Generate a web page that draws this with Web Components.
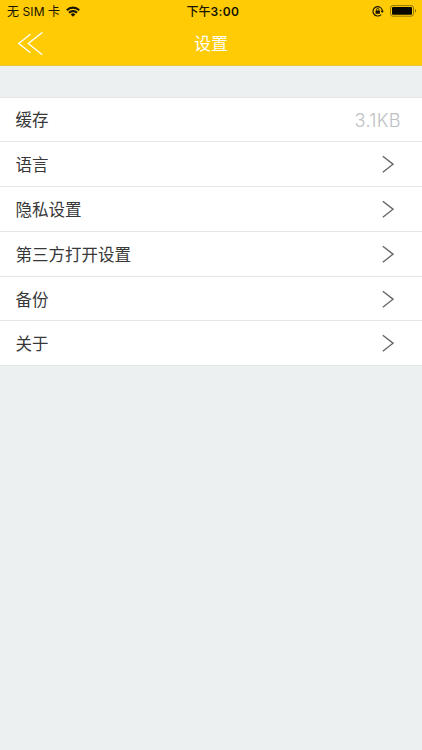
<!DOCTYPE html>
<html lang="zh-CN">
<head>
<meta charset="UTF-8">
<meta name="viewport" content="width=device-width, initial-scale=1">
<title>设置</title>
<style>
  html, body {
    margin: 0;
    height: 100%;
    background: #ecf0f1;
    font-family: Inter, "Noto Sans CJK SC", sans-serif;
    overflow: hidden;
  }
</style>
</head>
<body>
<settings-page>
  <status-bar slot="status" carrier="无 SIM 卡" time="3:00" period="下午"></status-bar>
  <nav-bar slot="nav">设置</nav-bar>
  <settings-row value="3.1KB">缓存</settings-row>
  <settings-row>语言</settings-row>
  <settings-row>隐私设置</settings-row>
  <settings-row>第三方打开设置</settings-row>
  <settings-row>备份</settings-row>
  <settings-row>关于</settings-row>
</settings-page>

<script>
class StatusBarComponent extends HTMLElement {
  constructor() {
    super();
    this._shadow = this.attachShadow({ mode: "open" });
    this._shadow.append(this.template.content.cloneNode(true));
  }

  get styleTemplate() {
    return `
      :host {
        display: grid;
        grid-template-columns: 1fr auto 1fr;
        align-items: center;
        height: 22px;
        padding: 0 5px 0 7px;
        box-sizing: border-box;
        color: #161300;
        font-size: 12px;
        line-height: 21px;
        white-space: nowrap;
      }

      .left, .right {
        display: flex;
        align-items: center;
        height: 22px;
      }

      .left { gap: 6px; }
      .right { justify-content: flex-end; gap: 6px; }

      .carrier {
        letter-spacing: 0.1px;
        padding-top: 1px;
      }

      .time {
        font-weight: 600;
        font-size: 12px;
        letter-spacing: 0.4px;
        padding: 1px 0 0 2px;
      }

      .period {
        font-weight: 500;
        letter-spacing: 0;
      }

      svg { display: block; }
      .right svg { margin-bottom: 1px; }
    `;
  }

  get template() {
    const template = document.createElement("template");
    template.innerHTML = `
      <style>${this.styleTemplate}</style>
      <div class="left">
        <span class="carrier">${this.getAttribute("carrier")}</span>
        <svg width="14" height="11" viewBox="0 0 14 11" fill="none" stroke="#161300" stroke-width="2.1">
          <path d="M.8 4.2a8.8 8.8 0 0 1 12.4 0"/>
          <path d="M3 6.8a5.7 5.7 0 0 1 8 0"/>
          <path d="M7 10.8 4.7 8.5a3.2 3.2 0 0 1 4.6 0z" fill="#161300" stroke="none"/>
        </svg>
      </div>
      <div class="time"><span class="period">${this.getAttribute("period")}</span>${this.getAttribute("time")}</div>
      <div class="right">
        <svg width="12" height="12" viewBox="0 0 12 12" fill="none" stroke="#161300">
          <path d="M9.1 9.6a4.7 4.7 0 1 1 1.3-3.7" stroke-width="1.1"/>
          <path d="M8.5 5.7h3.4l-1.7 2.2z" fill="#161300" stroke="none"/>
          <rect x="3.5" y="5.5" width="4.4" height="3.2" rx=".4" fill="#161300" stroke="none"/>
          <path d="M4.5 5.7V4.6a1.2 1.2 0 0 1 2.4 0v1.1" stroke-width=".9"/>
        </svg>
        <svg width="27" height="12" viewBox="0 0 27 12">
          <rect x=".5" y=".6" width="23" height="10.6" rx="2.4" fill="none" stroke="#161300" stroke-opacity=".5" stroke-width=".9"/>
          <rect x="2" y="2.1" width="20" height="7.6" rx="1" fill="#080700"/>
          <path d="M25 4.1c1.4.5 1.4 3.1 0 3.6z" fill="#161300" fill-opacity=".5"/>
        </svg>
      </div>`;
    return template;
  }
}

class NavBarComponent extends HTMLElement {
  constructor() {
    super();
    this._shadow = this.attachShadow({ mode: "open" });
    this._shadow.append(this.template.content.cloneNode(true));
  }

  get styleTemplate() {
    return `
      :host {
        display: grid;
        grid-template-columns: 1fr auto 1fr;
        align-items: center;
        height: 43px;
        padding: 0 17px;
        color: #fff;
        font-size: 17px;
        line-height: 43px;
      }

      slot {
        display: block;
        padding-top: 1px;
        height: 42px;
      }

      svg { display: block; }
    `;
  }

  get template() {
    const template = document.createElement("template");
    template.innerHTML = `
      <style>${this.styleTemplate}</style>
      <svg width="27" height="24" viewBox="0 0 27 24" fill="none" stroke="#fff" stroke-width="1.3">
        <path d="M13.5 2.2 1.7 11.5l11.8 9.3M25.3.4 11.3 11.5l14 11.2"/>
      </svg>
      <slot></slot>
      <span></span>`;
    return template;
  }
}

class SettingsRowComponent extends HTMLElement {
  constructor() {
    super();
    this._shadow = this.attachShadow({ mode: "open" });
    this._shadow.append(this.template.content.cloneNode(true));
  }

  get styleTemplate() {
    return `
      :host {
        display: flex;
        align-items: center;
        justify-content: space-between;
        height: 44.8px;
        padding: 0 21px 0 16px;
        box-sizing: border-box;
        border-bottom: 1px solid #e4e6e7;
        background: #fff;
        color: #383838;
        font-size: 16.5px;
        line-height: 42px;
      }

      .label {
        margin-left: -0.5px;
        padding-top: 2px;
      }

      .value {
        color: #bdc1c4;
        font-weight: 300;
        font-size: 18.2px;
        letter-spacing: 0.3px;
        padding-top: 2px;
      }

      svg {
        display: block;
        margin-right: 7px;
      }
    `;
  }

  get detail() {
    const value = this.getAttribute("value");
    if (value) {
      return `<span class="value">${value}</span>`;
    }
    return `
      <svg width="13" height="18" viewBox="0 0 13 18" fill="none" stroke="#666" stroke-width="1.4">
        <path d="M1.8 1.2 12 9.2 1.8 17.2"/>
      </svg>`;
  }

  get template() {
    const template = document.createElement("template");
    template.innerHTML = `
      <style>${this.styleTemplate}</style>
      <span class="label"><slot></slot></span>
      ${this.detail}`;
    return template;
  }
}

class SettingsPageComponent extends HTMLElement {
  constructor() {
    super();
    this._shadow = this.attachShadow({ mode: "open" });
    this._shadow.append(this.template.content.cloneNode(true));
  }

  get styleTemplate() {
    return `
      :host {
        display: block;
        min-height: 100%;
        background: #ecf0f1;
      }

      header {
        background: #fecb05;
        border-bottom: 1px solid #edc539;
      }

      main {
        margin-top: 30.5px;
        border-top: 1px solid #e4e6e7;
      }
    `;
  }

  get template() {
    const template = document.createElement("template");
    template.innerHTML = `
      <style>${this.styleTemplate}</style>
      <header>
        <slot name="status"></slot>
        <slot name="nav"></slot>
      </header>
      <main><slot></slot></main>`;
    return template;
  }
}

customElements.define("status-bar", StatusBarComponent);
customElements.define("nav-bar", NavBarComponent);
customElements.define("settings-row", SettingsRowComponent);
customElements.define("settings-page", SettingsPageComponent);
</script>
</body>
</html>
